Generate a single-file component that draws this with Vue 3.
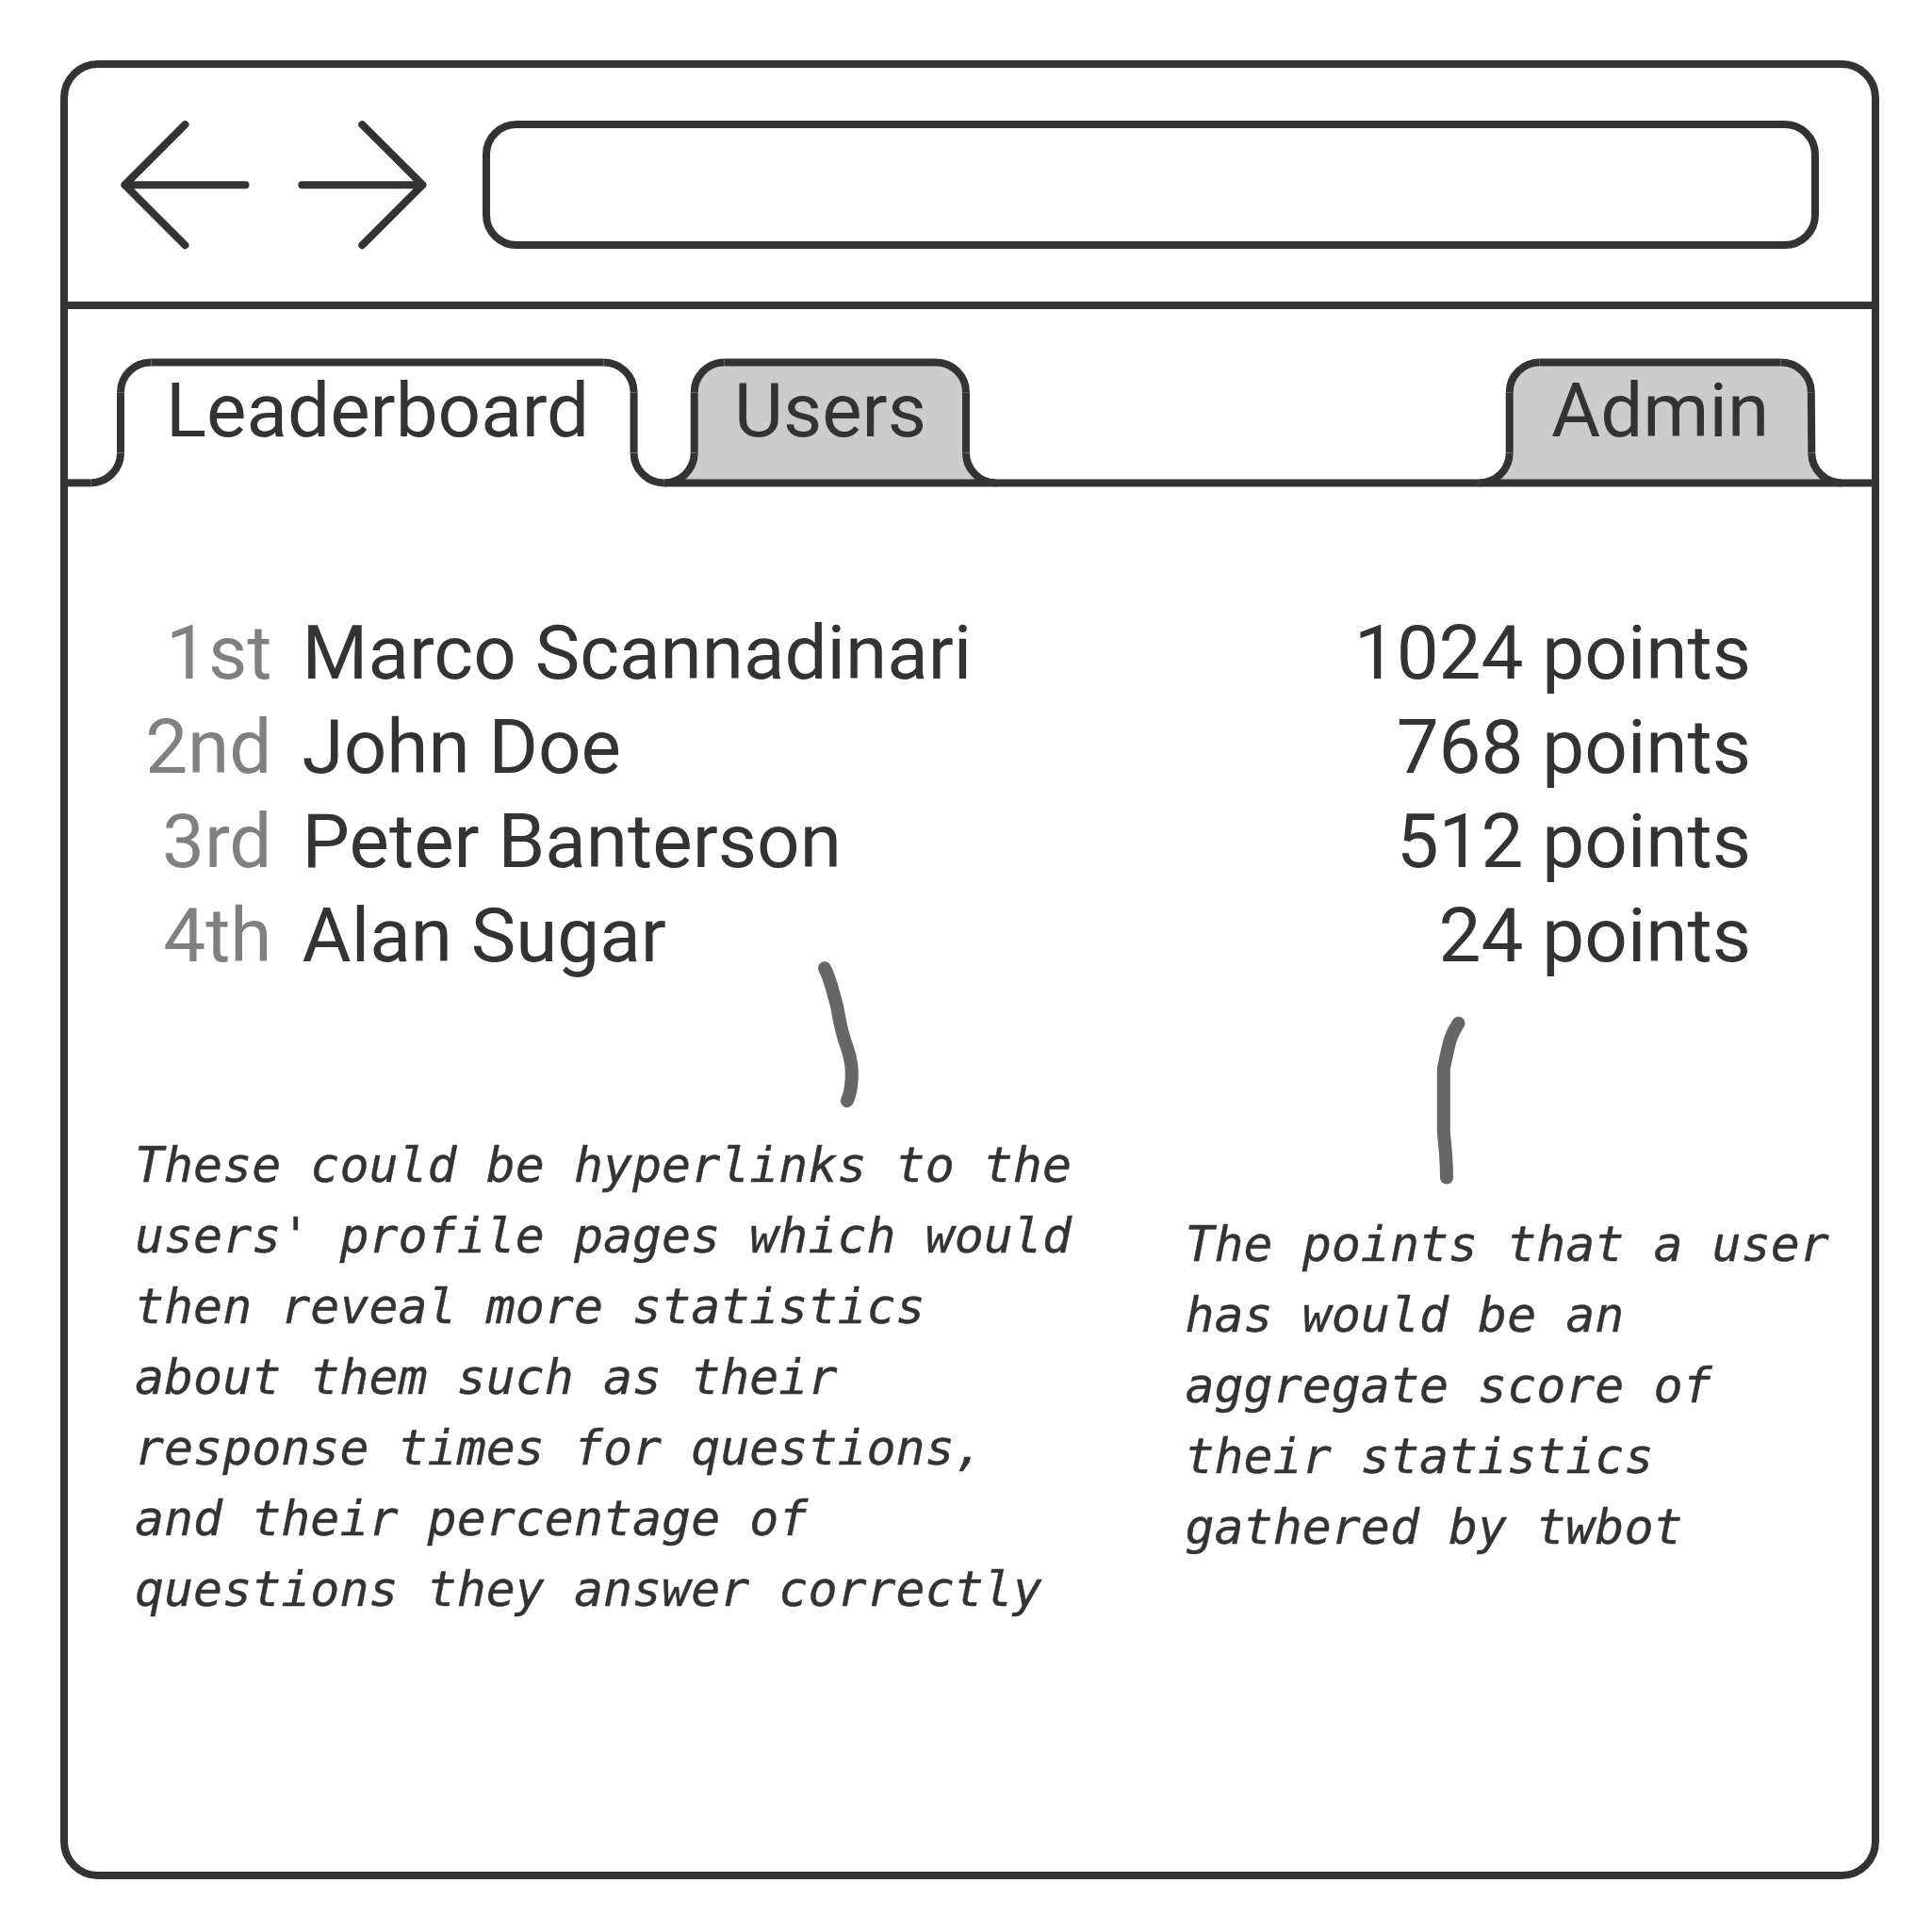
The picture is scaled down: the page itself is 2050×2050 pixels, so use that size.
<script setup>
const tabs = [
  { label: 'Leaderboard', name: 'leaderboard' },
  { label: 'Users', name: 'users' },
  { label: 'Admin', name: 'admin' },
]

const standings = [
  { rank: '1st', name: 'Marco Scannadinari', points: 1024 },
  { rank: '2nd', name: 'John Doe', points: 768 },
  { rank: '3rd', name: 'Peter Banterson', points: 512 },
  { rank: '4th', name: 'Alan Sugar', points: 24 },
]

const profileNote = [
  'These could be hyperlinks to the',
  "users' profile pages which would",
  'then reveal more statistics',
  'about them such as their',
  'response times for questions,',
  'and their percentage of',
  'questions they answer correctly',
]

const pointsNote = [
  'The points that a user',
  'has would be an',
  'aggregate score of',
  'their statistics',
  'gathered by twbot',
]

// Outline pieces of the tab strip, in page units
const outline = [
  'M72 512.4H96.4',
  'M96.4 512.4A32 32 0 0 0 128 480.4',
  'M128 480.4V416.4',
  'M128 416.4A32 32 0 0 1 160.4 384.4',
  'M160.4 384.4H640.6',
  'M640.6 384.4A32 32 0 0 1 672.6 416.4',
  'M672.6 416.4V480.4',
  'M672.6 480.4A32 32 0 0 0 704.6 512.4',
  'M704.6 512.4A32 32 0 0 0 736.7 480.4',
  'M736.7 480.4V416.4',
  'M736.7 416.4A32 32 0 0 1 768.6 384.4',
  'M768.6 384.4H993',
  'M993 384.4A32 32 0 0 1 1025 416.4',
  'M1025 416.4V480.4',
  'M1025 480.4A32 32 0 0 0 1057 512.4',
  'M704.6 512.4H1057',
  'M1057 512.4H1569.4',
  'M1569.4 512.4A32 32 0 0 0 1601.7 480.4',
  'M1601.7 480.4V416.4',
  'M1601.7 416.4A32 32 0 0 1 1633.6 384.4',
  'M1633.6 384.4H1889.6',
  'M1889.6 384.4A32 32 0 0 1 1921.8 416.4',
  'M1921.8 416.4L1922.3 480.4',
  'M1922.3 480.4A32 32 0 0 0 1954 512.4',
  'M1569.4 512.4H1986',
]
</script>

<template>
  <div class="page">
    <main class="window">
      <header class="toolbar">
        <svg class="arrow" viewBox="0 0 137 137">
          <path d="M68.4 4.2L4.4 68.2L68.4 132.2M4.4 68.2H132.5" />
        </svg>
        <svg class="arrow" viewBox="0 0 137 137">
          <path d="M68.3 4.2L132.4 68.2L68.3 132.2M132.4 68.2H4.3" />
        </svg>
        <div class="address"></div>
      </header>

      <nav class="tabs">
        <svg class="tab-shapes" viewBox="72 328 1914 192">
          <path class="fill" d="M722 512V505L736.7 480V416A32 32 0 0 1 768.6 384.4H993A32 32 0 0 1 1025 416V480L1040 505V512Z" />
          <path class="fill" d="M1588 512V507L1602 487V416A32 32 0 0 1 1633.6 384.4H1889.6A32 32 0 0 1 1921.8 416V480L1936 505V512Z" />
          <path v-for="d in outline" :key="d" class="line" :d="d" />
        </svg>
        <span v-for="tab in tabs" :key="tab.name" class="tab" :class="tab.name">{{ tab.label }}</span>
      </nav>

      <section class="board">
        <div v-for="row in standings" :key="row.rank" class="row">
          <span class="rank">{{ row.rank }}</span>
          <span class="name">{{ row.name }}</span>
          <span class="points">{{ row.points }} points</span>
        </div>
      </section>

      <section class="notes">
        <p class="note profile">
          <span v-for="line in profileNote" :key="line">{{ line }}</span>
        </p>
        <p class="note score">
          <span v-for="line in pointsNote" :key="line">{{ line }}</span>
        </p>
      </section>
    </main>

    <svg class="pointers" viewBox="0 0 2050 2050">
      <path d="M875 1027.3C881 1038 883 1050 888 1067C890 1078 892 1094 899 1112C904 1127 904 1135 903.7 1145C903 1157 902 1162 898.8 1168" />
      <path d="M1547.5 1085.8C1538 1101 1538 1105 1531.8 1134V1201.5C1534 1221 1535 1232 1535 1249.5" />
    </svg>
  </div>
</template>

<style>
body {
  margin: 0;
  background: #fff;
}
</style>

<style scoped>
.page {
  position: relative;
  box-sizing: border-box;
  width: 2050px;
  height: 2050px;
  padding: 64px 56px 56px 64px;
  background: #fff;
  color: #333;
  font-family: Roboto, sans-serif;
  font-size: 80px;
  line-height: 100px;
  overflow: hidden;
}

.window {
  box-sizing: border-box;
  width: 1930px;
  height: 1930px;
  border: 8px solid #333;
  border-radius: 40px;
}

.toolbar {
  display: flex;
  box-sizing: border-box;
  height: 256px;
  padding: 56px 56px 0;
  border-bottom: 8px solid #333;
}

.arrow {
  flex: none;
  width: 137px;
  height: 137px;
  margin-right: 51px;
  fill: none;
  stroke: #333;
  stroke-width: 8;
  stroke-linecap: round;
  stroke-linejoin: round;
}

.arrow + .arrow {
  margin-right: 59px;
}

.address {
  flex: 1;
  box-sizing: border-box;
  height: 136px;
  border: 8px solid #333;
  border-radius: 36px;
}

.tabs {
  position: relative;
  display: flex;
  box-sizing: border-box;
  height: 192px;
  padding-top: 58px;
}

.tab-shapes {
  position: absolute;
  top: 0;
  left: 0;
  width: 1914px;
  height: 192px;
}

.fill {
  fill: #ccc;
}

.line {
  fill: none;
  stroke: #333;
  stroke-width: 8;
}

.tab {
  position: relative;
  white-space: nowrap;
}

.leaderboard {
  width: 603px;
  margin-left: 104px;
}

.users {
  width: 867px;
}

.board {
  margin-top: 123px;
}

.row {
  display: flex;
  height: 100px;
  white-space: nowrap;
}

.rank {
  width: 216.4px;
  text-align: right;
  color: #808080;
}

.name {
  flex: 1;
  margin-left: 32.2px;
}

.points {
  margin-right: 128px;
}

.notes {
  display: flex;
  margin-top: 155.5px;
  font-family: "DejaVu Sans Mono", monospace;
  font-size: 51.6px;
  font-style: italic;
  line-height: 75px;
  -webkit-text-stroke: 0.4px #333;
}

.note {
  margin: 0;
  white-space: pre;
}

.note span {
  display: block;
}

.profile {
  width: 1114.5px;
  margin-left: 71px;
}

.score {
  margin-top: 84px;
}

.pointers {
  position: absolute;
  top: 0;
  left: 0;
  width: 2050px;
  height: 2050px;
  fill: none;
  stroke: #666;
  stroke-width: 14;
  stroke-linecap: round;
  stroke-linejoin: round;
  pointer-events: none;
}
</style>
